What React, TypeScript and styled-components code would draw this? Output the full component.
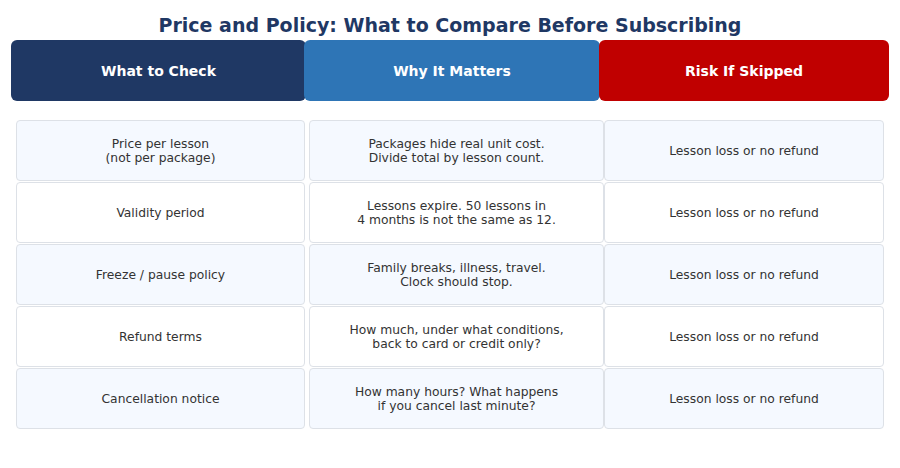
import React from "react";
import styled, { createGlobalStyle } from "styled-components";

const GlobalStyle = createGlobalStyle`
  body {
    margin: 0;
    background: #ffffff;
    font-family: "DejaVu Sans", "Liberation Sans", sans-serif;
  }
`;

const Page = styled.div`
  width: 900px;
  height: 468px;
  display: flex;
  flex-direction: column;
  background: #ffffff;
`;

const Title = styled.h1`
  margin: 0;
  height: 40px;
  padding-top: 15px;
  box-sizing: border-box;
  font-size: 19px;
  line-height: 20px;
  font-weight: 700;
  color: #1f3864;
  text-align: center;
`;

const HeaderRow = styled.div`
  display: flex;
  padding-left: 11px;
`;

const HeaderCell = styled.div<{ $bg: string; $width: number; $overlap: number }>`
  width: ${({ $width }) => $width}px;
  height: 61px;
  margin-left: ${({ $overlap }) => -$overlap}px;
  display: flex;
  align-items: center;
  justify-content: center;
  background: ${({ $bg }) => $bg};
  border-radius: 6px;
  color: #ffffff;
  font-size: 14px;
  font-weight: 700;
`;

const Table = styled.div`
  display: grid;
  grid-template-columns: 293px 295px 280px;
  grid-auto-rows: 61px;
  row-gap: 1px;
  padding: 19px 0 0 16px;
`;

const Cell = styled.div<{ $shade: boolean; $gapAfter?: boolean }>`
  display: flex;
  align-items: center;
  justify-content: center;
  margin-right: ${({ $gapAfter }) => ($gapAfter ? "4px" : "0")};
  box-sizing: border-box;
  border: 1px solid #dde1e7;
  border-radius: 4px;
  background: ${({ $shade }) => ($shade ? "#f5f9ff" : "#ffffff")};
  color: #333333;
  font-size: 12.3px;
  line-height: 14px;
  text-align: center;
  white-space: pre-line;
`;

const headers = [
  { label: "What to Check", bg: "#1f3864", width: 295, overlap: 0 },
  { label: "Why It Matters", bg: "#2e75b6", width: 296, overlap: 2 },
  { label: "Risk If Skipped", bg: "#c00000", width: 290, overlap: 1 },
];

const rows = [
  ["Price per lesson\n(not per package)", "Packages hide real unit cost.\nDivide total by lesson count."],
  ["Validity period", "Lessons expire. 50 lessons in\n4 months is not the same as 12."],
  ["Freeze / pause policy", "Family breaks, illness, travel.\nClock should stop."],
  ["Refund terms", "How much, under what conditions,\nback to card or credit only?"],
  ["Cancellation notice", "How many hours? What happens\nif you cancel last minute?"],
];

const risk = "Lesson loss or no refund";

const App = () => {
  return (
    <Page>
      <GlobalStyle />
      <Title>Price and Policy: What to Compare Before Subscribing</Title>
      <HeaderRow>
        {headers.map((h) => (
          <HeaderCell key={h.label} $bg={h.bg} $width={h.width} $overlap={h.overlap}>
            {h.label}
          </HeaderCell>
        ))}
      </HeaderRow>
      <Table>
        {rows.map(([check, why], i) => (
          <React.Fragment key={check}>
            <Cell $shade={i % 2 === 0} $gapAfter>{check}</Cell>
            <Cell $shade={i % 2 === 0}>{why}</Cell>
            <Cell $shade={i % 2 === 0}>{risk}</Cell>
          </React.Fragment>
        ))}
      </Table>
    </Page>
  );
};

export default App;
